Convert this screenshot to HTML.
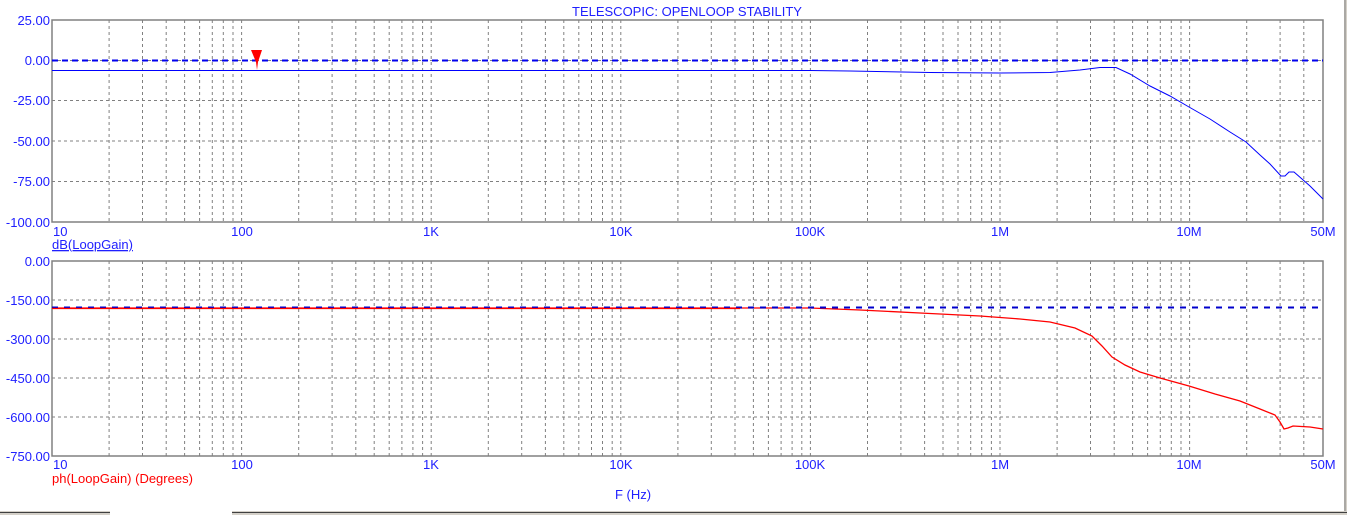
<!DOCTYPE html>
<html><head><meta charset="utf-8"><style>
html,body{margin:0;padding:0;background:#fff;width:1347px;height:515px;overflow:hidden}
svg{display:block}
text{font-family:"Liberation Sans",sans-serif;font-size:13px}
</style></head><body>
<svg width="1347" height="515" viewBox="0 0 1347 515" xmlns="http://www.w3.org/2000/svg">
<rect x="0" y="0" width="1347" height="515" fill="#fff"/>
<rect x="1344" y="0" width="3" height="515" fill="#d4d0c8"/>
<line x1="1345" y1="0" x2="1345" y2="512" stroke="#808080"/>
<rect x="0" y="511" width="1347" height="4" fill="#d4d0c8"/>
<line x1="0" y1="512.5" x2="1347" y2="512.5" stroke="#404040"/>
<rect x="110" y="511" width="122" height="4" fill="#fff"/>
<g stroke="#808080" stroke-width="1" stroke-dasharray="3,3" fill="none">
<path d="
M109.1 20V222M142.5 20V222M166.2 20V222M184.6 20V222M199.6 20V222M212.3 20V222M223.3 20V222M233.0 20V222M241.6 20V222
M298.7 20V222M332.1 20V222M355.8 20V222M374.2 20V222M389.2 20V222M401.9 20V222M412.9 20V222M422.6 20V222M431.2 20V222
M488.3 20V222M521.7 20V222M545.4 20V222M563.8 20V222M578.8 20V222M591.5 20V222M602.5 20V222M612.2 20V222M620.8 20V222
M677.9 20V222M711.3 20V222M735.0 20V222M753.4 20V222M768.4 20V222M781.1 20V222M792.1 20V222M801.8 20V222M810.4 20V222
M867.5 20V222M900.9 20V222M924.6 20V222M943.0 20V222M958.0 20V222M970.7 20V222M981.7 20V222M991.4 20V222M1000.0 20V222
M1057.1 20V222M1090.5 20V222M1114.2 20V222M1132.6 20V222M1147.6 20V222M1160.3 20V222M1171.3 20V222M1181.0 20V222M1189.6 20V222
M1246.7 20V222M1280.1 20V222M1303.8 20V222
M109.1 261V456M142.5 261V456M166.2 261V456M184.6 261V456M199.6 261V456M212.3 261V456M223.3 261V456M233.0 261V456M241.6 261V456
M298.7 261V456M332.1 261V456M355.8 261V456M374.2 261V456M389.2 261V456M401.9 261V456M412.9 261V456M422.6 261V456M431.2 261V456
M488.3 261V456M521.7 261V456M545.4 261V456M563.8 261V456M578.8 261V456M591.5 261V456M602.5 261V456M612.2 261V456M620.8 261V456
M677.9 261V456M711.3 261V456M735.0 261V456M753.4 261V456M768.4 261V456M781.1 261V456M792.1 261V456M801.8 261V456M810.4 261V456
M867.5 261V456M900.9 261V456M924.6 261V456M943.0 261V456M958.0 261V456M970.7 261V456M981.7 261V456M991.4 261V456M1000.0 261V456
M1057.1 261V456M1090.5 261V456M1114.2 261V456M1132.6 261V456M1147.6 261V456M1160.3 261V456M1171.3 261V456M1181.0 261V456M1189.6 261V456
M1246.7 261V456M1280.1 261V456M1303.8 261V456
M52 60.5H1323M52 100.5H1323M52 141H1323M52 181.5H1323
M52 300H1323M52 339H1323M52 378H1323M52 417H1323"/>
</g>
<g stroke="#808080" stroke-width="1.5" fill="none">
<rect x="52" y="20" width="1271" height="202"/>
<rect x="52" y="261" width="1271" height="195"/>
</g>
<path d="M52 70.5L810 70.5L850 71L930 72.5L1000 73L1050 72.5L1080 70L1100 67.5L1116 67.5L1130 74L1150 86L1170 96L1189 107L1210 119L1230 132L1246 142L1260 155L1270 164L1281 176L1285 176L1289 172L1294 172L1310 186L1323 199" stroke="#0000ff" stroke-width="1" fill="none"/>
<line x1="52" y1="60.5" x2="1323" y2="60.5" stroke="#0000ee" stroke-width="2" stroke-dasharray="6,4"/>
<polygon points="251,50 262,50 258,62 257,70 256,62" fill="#ff0000"/>
<path d="M52 308L810 308L860 310L920 313L980 316L1020 319L1050 322L1075 328L1092 336L1102 346L1112 357L1125 365L1140 372L1160 378L1189 386L1215 394L1240 401L1260 409L1275 415L1280 422L1284 429L1288 428L1293 426L1310 427L1323 429" stroke="#ff0000" stroke-width="1.3" fill="none"/>
<line x1="52" y1="307.5" x2="1323" y2="307.5" stroke="#0000cc" stroke-width="2" stroke-dasharray="6,6"/>
<line x1="52" y1="308.5" x2="740" y2="308.5" stroke="#ff0000" stroke-width="1.3"/>
<g fill="#2020ff">
<text x="687" y="16" text-anchor="middle">TELESCOPIC: OPENLOOP STABILITY</text>
<text x="50" y="25" text-anchor="end">25.00</text>
<text x="50" y="65" text-anchor="end">0.00</text>
<text x="50" y="105" text-anchor="end">-25.00</text>
<text x="50" y="146" text-anchor="end">-50.00</text>
<text x="50" y="186" text-anchor="end">-75.00</text>
<text x="50" y="227" text-anchor="end">-100.00</text>
<text x="50" y="266" text-anchor="end">0.00</text>
<text x="50" y="305" text-anchor="end">-150.00</text>
<text x="50" y="344" text-anchor="end">-300.00</text>
<text x="50" y="383" text-anchor="end">-450.00</text>
<text x="50" y="422" text-anchor="end">-600.00</text>
<text x="50" y="461" text-anchor="end">-750.00</text>
<text x="53" y="236">10</text>
<text x="242" y="236" text-anchor="middle">100</text>
<text x="431" y="236" text-anchor="middle">1K</text>
<text x="621" y="236" text-anchor="middle">10K</text>
<text x="810" y="236" text-anchor="middle">100K</text>
<text x="1000" y="236" text-anchor="middle">1M</text>
<text x="1189" y="236" text-anchor="middle">10M</text>
<text x="1323" y="236" text-anchor="middle">50M</text>
<text x="53" y="469">10</text>
<text x="242" y="469" text-anchor="middle">100</text>
<text x="431" y="469" text-anchor="middle">1K</text>
<text x="621" y="469" text-anchor="middle">10K</text>
<text x="810" y="469" text-anchor="middle">100K</text>
<text x="1000" y="469" text-anchor="middle">1M</text>
<text x="1189" y="469" text-anchor="middle">10M</text>
<text x="1323" y="469" text-anchor="middle">50M</text>
<text x="52" y="249" text-decoration="underline">dB(LoopGain)</text>
<text x="633" y="499" text-anchor="middle">F (Hz)</text>
</g>
<text x="52" y="483" fill="#ff0000">ph(LoopGain) (Degrees)</text>
</svg>
</body></html>
